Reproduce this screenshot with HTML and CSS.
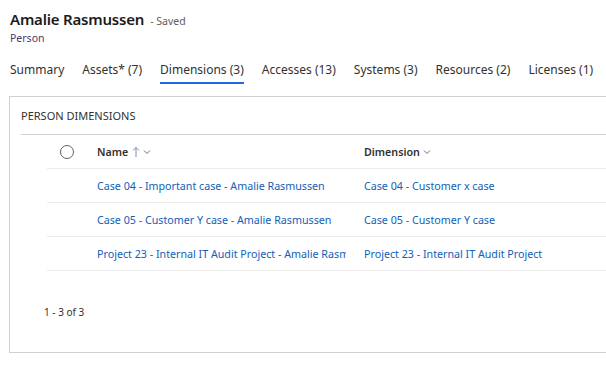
FILE: index.html
```html
<!DOCTYPE html>
<html lang="en">
<head>
    <meta charset="UTF-8">
    <title>Amalie Rasmussen - Person</title>
    <link rel="stylesheet" href="styles.css">
</head>
<body>
    <!-- Record header -->
    <div class="record-header">
        <div class="title-line">
            <h1>Amalie Rasmussen</h1>
            <span class="save-state">- Saved</span>
        </div>
        <div class="entity-name">Person</div>
    </div>

    <!-- Tabs -->
    <div class="tabs">
        <div class="tab">Summary</div>
        <div class="tab">Assets* (7)</div>
        <div class="tab active">Dimensions (3)</div>
        <div class="tab">Accesses (13)</div>
        <div class="tab">Systems (3)</div>
        <div class="tab">Resources (2)</div>
        <div class="tab">Licenses (1)</div>
    </div>

    <!-- Subgrid card -->
    <div class="card">
        <div class="card-title">PERSON DIMENSIONS</div>

        <div class="grid">
            <div class="grid-row grid-head">
                <div class="cell cell-check"><span class="check-circle"></span></div>
                <div class="cell cell-name">
                    <span class="head-label">Name</span>
                    <svg class="sort-arrow" width="8" height="12" viewBox="0 0 8 12"><path d="M4 11 L4 1.5 M1 4.5 L4 1.5 L7 4.5" fill="none" stroke="#7a8fa8" stroke-width="1"/></svg>
                    <svg class="chevron" width="8" height="8" viewBox="0 0 8 8"><path d="M1 2.5 L4 5.5 L7 2.5" fill="none" stroke="#605e5c" stroke-width="0.9"/></svg>
                </div>
                <div class="cell cell-dim">
                    <span class="head-label">Dimension</span>
                    <svg class="chevron" width="8" height="8" viewBox="0 0 8 8"><path d="M1 2.5 L4 5.5 L7 2.5" fill="none" stroke="#605e5c" stroke-width="0.9"/></svg>
                </div>
            </div>
            <div class="grid-row">
                <div class="cell cell-check"></div>
                <div class="cell cell-name"><a href="#">Case 04 - Important case - Amalie Rasmussen</a></div>
                <div class="cell cell-dim"><a href="#">Case 04 - Customer x case</a></div>
            </div>
            <div class="grid-row">
                <div class="cell cell-check"></div>
                <div class="cell cell-name"><a href="#">Case 05 - Customer Y case - Amalie Rasmussen</a></div>
                <div class="cell cell-dim"><a href="#">Case 05 - Customer Y case</a></div>
            </div>
            <div class="grid-row">
                <div class="cell cell-check"></div>
                <div class="cell cell-name"><a href="#">Project 23 - Internal IT Audit Project - Amalie Rasmussen</a></div>
                <div class="cell cell-dim"><a href="#">Project 23 - Internal IT Audit Project</a></div>
            </div>
        </div>

        <div class="grid-footer">1 - 3 of 3</div>
    </div>
</body>
</html>
```

FILE: styles.css
```css
/* Global */
body {
    margin: 0;
    width: 606px;
    height: 369px;
    overflow: hidden;
    background: #fff;
    color: #242424;
    font-family: 'Segoe UI', 'Noto Sans', sans-serif;
}

/* Record header */
.record-header {
    padding: 8px 10px 0;
}

.title-line {
    display: flex;
    align-items: baseline;
    gap: 6px;
}

.title-line h1 {
    margin: 0;
    font-size: 15px;
    font-weight: 600;
    line-height: 22px;
    letter-spacing: -0.2px;
    color: #1b1b1b;
}

.save-state {
    font-size: 10.5px;
    color: #605e5c;
}

.entity-name {
    font-size: 10.5px;
    line-height: 16px;
    color: #4e3a6e;
}

/* Tabs */
.tabs {
    display: flex;
    padding: 15px 0 0 10px;
    gap: 18px;
}

.tab {
    font-size: 12px;
    line-height: 18px;
    padding-bottom: 3px;
    color: #323130;
    border-bottom: 2px solid transparent;
    white-space: nowrap;
}

.tab.active {
    border-bottom-color: #2266e3;
}

/* Card */
.card {
    margin: 12px 0 0 9px;
    width: 640px;
    height: 255px;
    border: 1px solid #d1d1d1;
    padding-left: 11px;
}

.card-title {
    font-size: 11px;
    line-height: 37px;
    height: 37px;
    color: #323130;
    border-bottom: 1px solid #d1d1d1;
}

/* Grid */
.grid {
    margin-left: 26px;
}

.grid-row {
    display: grid;
    grid-template-columns: 50px 267px 1fr;
    height: 33px;
    border-bottom: 1px solid #edebe9;
    align-items: center;
}

.cell {
    font-size: 10.7px;
    white-space: nowrap;
}

.cell-check {
    padding-left: 13px;
    display: flex;
    align-items: center;
}

.check-circle {
    width: 12px;
    height: 12px;
    border: 1px solid #605e5c;
    border-radius: 50%;
}

.cell-name {
    padding-right: 18px;
    overflow: hidden;
}

.cell-name a {
    display: block;
    overflow: hidden;
}

.grid-head .cell {
    color: #323130;
    display: flex;
    align-items: center;
    gap: 3px;
}

.head-label {
    font-weight: 600;
}

.sort-arrow {
    margin-left: 1px;
}

.cell a {
    color: #1160b7;
    text-decoration: none;
}

/* Footer */
.grid-footer {
    padding: 34px 0 0 23px;
    font-size: 10px;
    color: #323130;
}
```
